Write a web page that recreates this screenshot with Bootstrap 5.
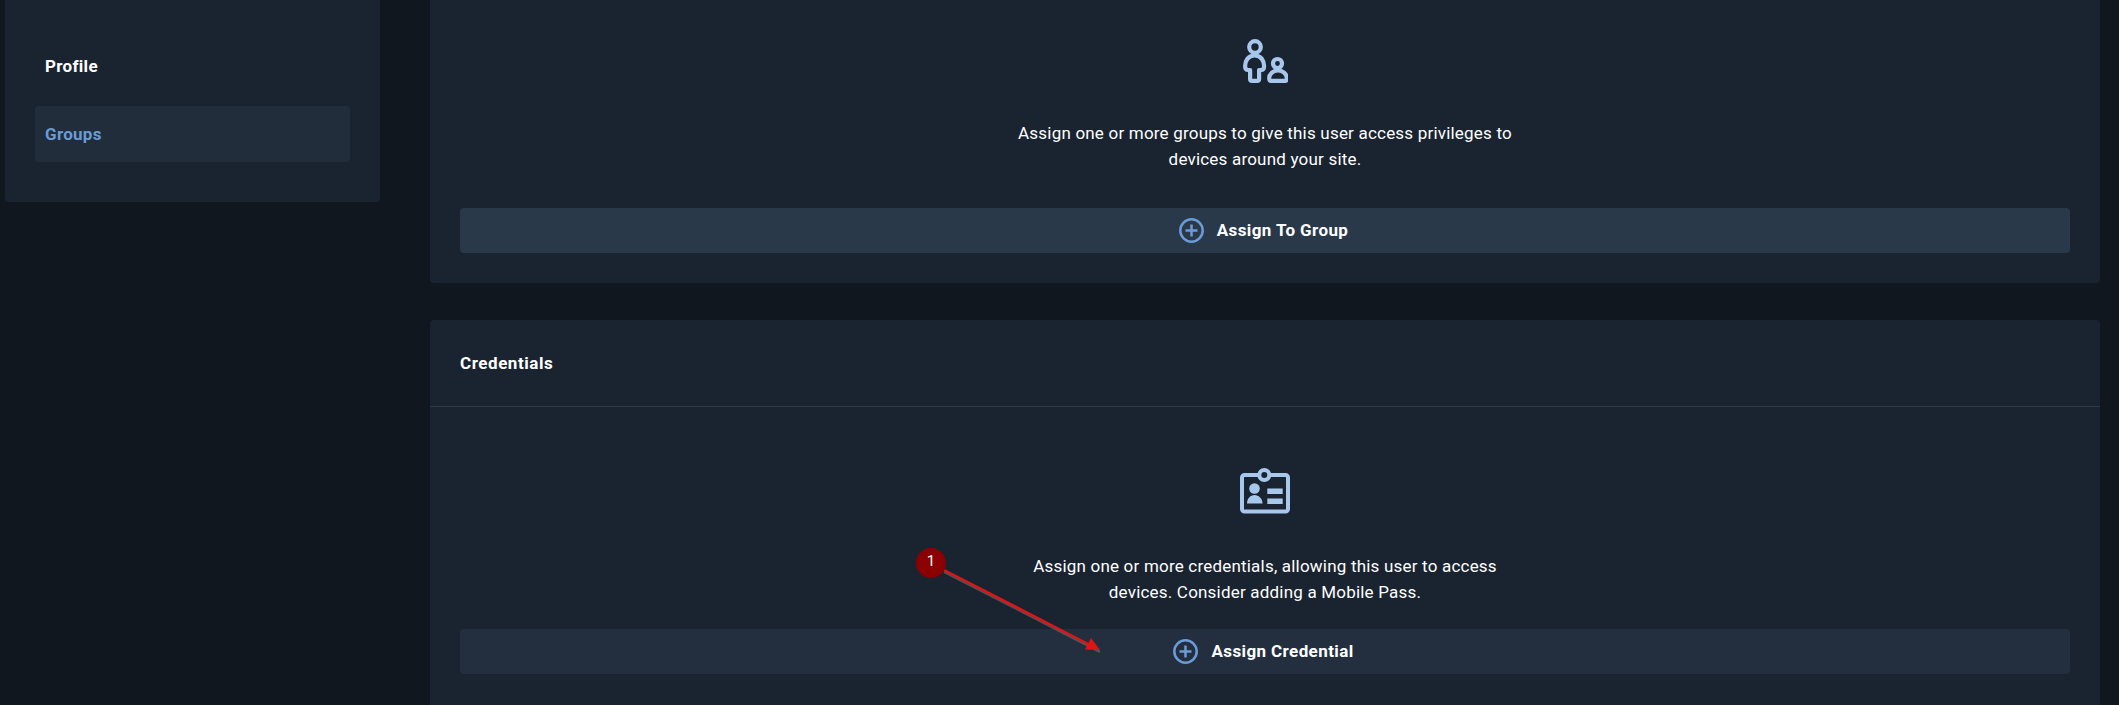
<!DOCTYPE html>
<html lang="en">
<head>
<meta charset="utf-8">
<title>User groups and credentials</title>
<link href="https://cdn.jsdelivr.net/npm/bootstrap@5.3.0/dist/css/bootstrap.min.css" rel="stylesheet">
<style>
html, body { height: 705px; overflow: hidden; }
body { background: #10171e; color: #fff; font-family: Roboto, "Liberation Sans", sans-serif; font-size: 17px; }
.page-wrap { position: relative; height: 705px; overflow: hidden; padding-left: 5px; padding-right: 19px; gap: 50px; }
.side-col { width: 375px; flex: none; }
.main-col { width: 1670px; flex: none; gap: 37px; }
.panel { background: #1a2430; border: 0; border-radius: 4px; color: #fff; --bs-card-bg: #1a2430; }
.panel-top { border-top-left-radius: 0; border-top-right-radius: 0; }
.side-panel { height: 202px; padding: 38px 30px 40px; gap: 12px; }
.side-link { height: 56px; padding: 1px 10px 0; display: flex; align-items: center; color: #fff; font-weight: 700; text-decoration: none; border-radius: 4px; letter-spacing: .3px; }
.side-link.on { background: #212d3b; color: #6b9bd6; }
.panel-head { height: 87px; padding: 1px 30px 0; display: flex; align-items: center; background: transparent; border-bottom: 1px solid #2c3a4a; font-weight: 700; letter-spacing: .55px; }
.panel-main { padding: 0 30px 30px; text-align: center; }
.top-main { padding-top: 39px; }
.lower-main { padding-top: 61px; }
.pic { display: block; margin: 0 auto; color: #a8c7ec; }
.hint { width: 505px; margin: 0 auto; line-height: 26px; letter-spacing: .2px; }
.hint-one { margin-top: 37px; margin-bottom: 36px; }
.hint-two { margin-top: 39px; margin-bottom: 24px; }
.wide-btn { width: 100%; height: 45px; border: 0; border-radius: 4px; background: #2a3949; color: #fff; font-size: 17px; font-weight: 700; gap: 13px; padding: 0 3px 0 0; letter-spacing: .4px; }
.wide-btn:hover { background: #2a3949; color: #fff; }
.wide-btn.dim, .wide-btn.dim:hover { background: #232f3f; }
.plus { color: #6b9bd6; flex: none; }
.tail-space { height: 60px; }
.note-layer { position: absolute; left: 0; top: 0; pointer-events: none; }
.note-dot { position: absolute; left: 916px; top: 548px; width: 30px; height: 30px; border-radius: 50%; background: #8b0000; color: #fff; font-size: 15px; line-height: 27px; text-align: center; }
</style>
</head>
<body>
<div class="page-wrap d-flex align-items-start">
  <aside class="side-col">
    <nav class="panel panel-top side-panel d-flex flex-column">
      <a class="side-link" href="#">Profile</a>
      <a class="side-link on" href="#">Groups</a>
    </nav>
  </aside>
  <main class="main-col d-flex flex-column">
    <section class="card panel panel-top">
      <div class="card-body panel-main top-main">
        <svg class="pic" width="45" height="44" viewBox="0 0 45 44" fill="none" stroke="currentColor" stroke-width="4.200" stroke-linejoin="round" aria-hidden="true">
          <circle cx="12" cy="8" r="5.800"/>
          <path d="M11.500 16.500C5 16.500 2.100 22 2.100 27c0 2.500 1 4 3 4h2v9c0 1.200 1 1.900 2 1.900h5c1 0 2-.7 2-1.900v-9h2c2 0 3-1.500 3-4 0-5-2.900-10.500-9.400-10.500z"/>
          <circle cx="34.500" cy="24.500" r="4.500"/>
          <path d="M35 31.500c-5.500 0-8.800 4-8.800 7.500 0 2 .5 2.900 1.800 2.900h14c1.300 0 1.800-.9 1.800-2.900 0-3.500-3.300-7.500-8.800-7.500z"/>
        </svg>
        <p class="hint hint-one">Assign one or more groups to give this user access privileges to devices around your site.</p>
        <button type="button" class="btn wide-btn d-flex align-items-center justify-content-center">
          <svg class="plus" width="25" height="25" viewBox="0 0 25 25" fill="none" stroke="currentColor" stroke-width="2.500" aria-hidden="true"><circle cx="12.500" cy="12.500" r="11.200"/><path d="M12.500 6.500v12M6.500 12.500h12"/></svg>
          <span>Assign To Group</span>
        </button>
      </div>
    </section>
    <section class="card panel">
      <div class="card-header panel-head">Credentials</div>
      <div class="card-body panel-main lower-main">
        <svg class="pic" width="50" height="46" viewBox="0 0 50 46" fill="none" stroke="currentColor" stroke-width="4" aria-hidden="true">
          <rect x="2" y="7" width="46" height="36.500" rx="2.500"/>
          <circle cx="24.300" cy="7" r="5" fill="#1a2430"/>
          <circle cx="14.500" cy="20.500" r="5.300" fill="currentColor" stroke="none"/>
          <path d="M7 35.500c0-5 3.500-8.500 7.500-8.500s8 3.500 8 8.500z" fill="currentColor" stroke="none"/>
          <path d="M27.300 20.500h15.400v5.500H27.300zM27.300 30.500h15.400v5.500H27.300z" fill="currentColor" stroke="none"/>
        </svg>
        <p class="hint hint-two">Assign one or more credentials, allowing this user to access devices. Consider adding a Mobile Pass.</p>
        <button type="button" class="btn wide-btn dim d-flex align-items-center justify-content-center">
          <svg class="plus" width="25" height="25" viewBox="0 0 25 25" fill="none" stroke="currentColor" stroke-width="2.500" aria-hidden="true"><circle cx="12.500" cy="12.500" r="11.200"/><path d="M12.500 6.500v12M6.500 12.500h12"/></svg>
          <span>Assign Credential</span>
        </button>
        <div class="tail-space"></div>
      </div>
    </section>
  </main>
  <svg class="note-layer" width="2119" height="705" aria-hidden="true">
    <line x1="944" y1="572" x2="1100" y2="652" stroke="#777" stroke-width="2" opacity=".55"/>
    <line x1="944" y1="570" x2="1090" y2="645" stroke="#e01414" stroke-width="2.500"/>
    <path d="M1100 650L1085 649.500 1091 638z" fill="#e01414"/>
  </svg>
  <div class="note-dot">1</div>
</div>
<script src="https://cdn.jsdelivr.net/npm/bootstrap@5.3.0/dist/js/bootstrap.bundle.min.js"></script>
</body>
</html>
